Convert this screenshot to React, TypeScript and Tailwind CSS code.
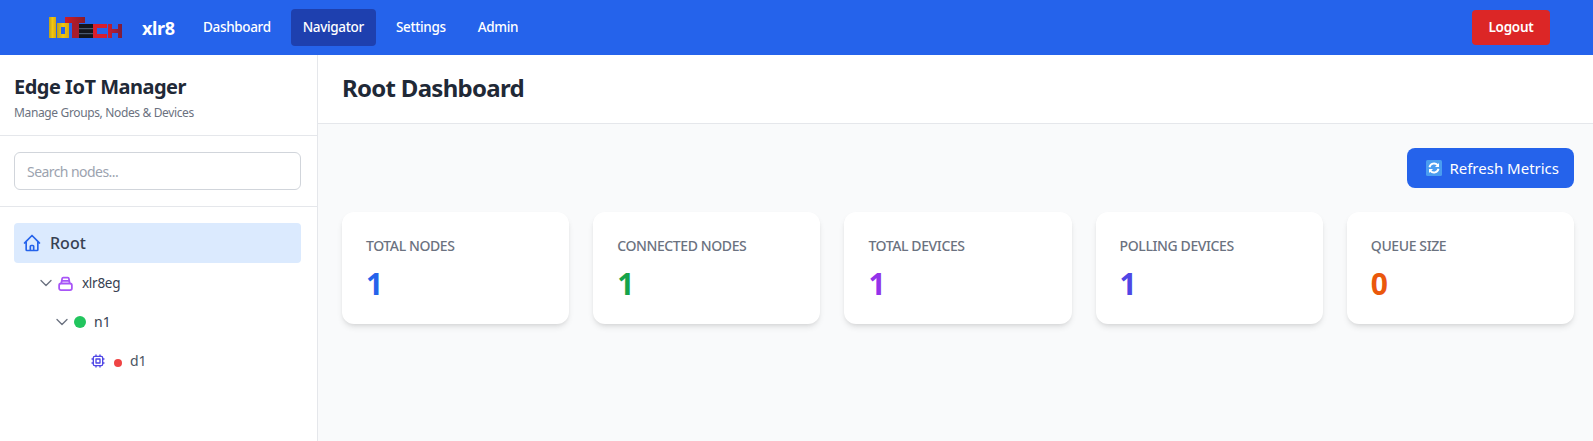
import { ChevronDown } from 'lucide-react';
import { HiOutlineChip, HiOutlineHome } from 'react-icons/hi';

function Logo() {
	return (
		<svg width="74" height="21" viewBox="0 0 74 21" className="block">
			<defs>
				<linearGradient id="gold" x1="0" x2="1" y1="0" y2="0">
					<stop offset="0" stopColor="#b9a020" />
					<stop offset="0.5" stopColor="#f2c60f" />
					<stop offset="1" stopColor="#d8a80f" />
				</linearGradient>
				<linearGradient id="crim" x1="0" x2="1" y1="0" y2="0">
					<stop offset="0" stopColor="#d01c28" />
					<stop offset="1" stopColor="#8a1c2a" />
				</linearGradient>
				<linearGradient id="darkred" x1="0" x2="1" y1="0" y2="0">
					<stop offset="0" stopColor="#c81e30" />
					<stop offset="1" stopColor="#7c1c3c" />
				</linearGradient>
			</defs>
			<rect x="0" y="0" width="7" height="21" fill="url(#gold)" />
			<path d="M8 6h12v15H8z M12 10v7h4v-7z" fillRule="evenodd" fill="url(#gold)" />
			<rect x="16" y="0" width="20" height="6" fill="url(#crim)" />
			<rect x="23" y="6" width="7" height="15" fill="#a81c2c" />
			<rect x="30" y="7" width="14" height="14" fill="#14161c" />
			<rect x="30" y="11" width="14" height="1.2" fill="#4a5a70" />
			<rect x="30" y="16" width="14" height="1.2" fill="#4a5a70" />
			<path d="M44 7h14v4H48v6h10v4H44z" fill="#d81e2c" />
			<path d="M59 7h4v5h6V7h4v14h-4v-5h-6v5h-4z" fill="url(#darkred)" />
		</svg>
	);
}

function NavLink({ label, active }: { label: string; active?: boolean }) {
	return (
		<a
			className={
				active
					? 'h-[37px] px-3 flex items-center rounded bg-[#1e40af] text-white text-[13.5px] tracking-[-0.025em] font-medium'
					: 'h-[37px] px-3 flex items-center rounded text-white text-[13.5px] tracking-[-0.025em] font-medium'
			}
		>
			{label}
		</a>
	);
}

function RefreshIcon() {
	return (
		<svg width="16" height="16" viewBox="0 0 16 16" className="shrink-0">
			<rect width="16" height="16" rx="1.5" fill="#4a9df0" />
			<path d="M3.5 7.2A4.6 4.6 0 0 1 11.6 5.2" fill="none" stroke="#fff" strokeWidth="1.9" />
			<path d="M13 3v4H9z" fill="#fff" />
			<path d="M12.5 8.8A4.6 4.6 0 0 1 4.4 10.8" fill="none" stroke="#fff" strokeWidth="1.9" />
			<path d="M3 13V9h4z" fill="#fff" />
		</svg>
	);
}

function BoxIcon() {
	return (
		<svg width="15" height="15" viewBox="0 0 16 16" fill="none" stroke="#a855f7" strokeWidth="1.9" strokeLinejoin="round">
			<rect x="1.2" y="8" width="13.6" height="7" rx="2" />
			<path d="M3.5 8 4.4 2.8c.1-.6.5-1 1.1-1h5c.6 0 1 .4 1.1 1L12.5 8" />
			<path d="M3.8 5.2h8.4" />
		</svg>
	);
}

const stats = [
	{ label: 'TOTAL NODES', value: '1', color: 'text-[#2563eb]' },
	{ label: 'CONNECTED NODES', value: '1', color: 'text-[#16a34a]' },
	{ label: 'TOTAL DEVICES', value: '1', color: 'text-[#9333ea]' },
	{ label: 'POLLING DEVICES', value: '1', color: 'text-[#4f46e5]' },
	{ label: 'QUEUE SIZE', value: '0', color: 'text-[#ea580c]' },
];

export default function App() {
	return (
		<div className="h-[441px] w-full flex flex-col overflow-hidden bg-white font-['Noto_Sans',sans-serif]">
			<header className="h-[55px] shrink-0 bg-[#2563eb] flex items-center justify-between pl-[49px] pr-[43px]">
				<div className="flex items-center">
					<Logo />
					<span className="w-[32px] ml-[19px] mr-[17px] text-white text-lg font-bold tracking-[-0.02em]">xlr8</span>
					<nav className="flex items-center gap-2">
						<NavLink label="Dashboard" />
						<NavLink label="Navigator" active />
						<NavLink label="Settings" />
						<NavLink label="Admin" />
					</nav>
				</div>
				<button className="h-[35px] w-[78px] rounded bg-[#dc2626] text-white text-[13.5px] tracking-[-0.02em] font-semibold">Logout</button>
			</header>
			<div className="flex flex-1 min-h-0">
				<aside className="w-[318px] shrink-0 border-r border-[#e5e7eb] flex flex-col">
					<div className="h-[81px] px-[14px] pt-[18px] border-b border-[#e5e7eb]">
						<h2 className="text-xl font-bold leading-7 text-[#1f2937] tracking-[-0.025em]">Edge IoT Manager</h2>
						<p className="text-xs text-[#6b7280] mt-1 tracking-[-0.03em]">Manage Groups, Nodes &amp; Devices</p>
					</div>
					<div className="h-[71px] px-[14px] pt-4 border-b border-[#e5e7eb]">
						<input
							placeholder="Search nodes..."
							className="w-[287px] h-[38px] px-3 rounded-md border border-[#d1d5db] text-sm tracking-[-0.04em] outline-none placeholder:text-[#9ca3af]"
						/>
					</div>
					<div className="px-[14px] pt-4">
						<div className="h-10 w-[287px] rounded bg-[#dbeafe] flex items-center gap-2 pl-2">
							<HiOutlineHome className="w-5 h-5 text-[#2563eb]" />
							<span className="text-base font-medium text-[#374151]">Root</span>
						</div>
						<div className="h-[38px] flex items-center pl-[22px] mt-[1px]">
							<ChevronDown className="w-5 h-5 text-[#6b7280]" strokeWidth={1.6} />
							<span className="ml-[2px]"><BoxIcon /></span>
							<span className="ml-[9px] text-[13.5px] tracking-[-0.02em] text-[#374151]">xlr8eg</span>
						</div>
						<div className="h-[38px] flex items-center pl-[38px] mt-[1px]">
							<ChevronDown className="w-5 h-5 text-[#6b7280]" strokeWidth={1.6} />
							<span className="w-3 h-3 ml-[2px] rounded-full bg-[#22c55e]" />
							<span className="ml-2 text-sm text-[#374151]">n1</span>
						</div>
						<div className="h-[40px] flex items-center pl-[76px]">
							<HiOutlineChip className="w-4 h-4 text-[#4f46e5]" />
							<span className="ml-[8px] mt-[4px] w-2 h-2 rounded-full bg-[#ef4444]" />
							<span className="ml-2 text-sm text-[#4b5563]">d1</span>
						</div>
					</div>
				</aside>
				<main className="flex-1 min-w-0 bg-[#f9fafb] flex flex-col">
					<div className="h-[69px] shrink-0 bg-white border-b border-[#e5e7eb] pl-6 pb-[2px] flex items-center">
						<h1 className="text-2xl font-bold text-[#1f2937] tracking-[-0.03em]">Root Dashboard</h1>
					</div>
					<div className="pl-6 pr-[19px] pt-6">
						<div className="flex justify-end">
							<button className="h-10 pl-[19px] pr-[15px] rounded-lg bg-[#2563eb] text-white text-[15px] flex items-center gap-[7px]">
								<RefreshIcon />
								Refresh Metrics
							</button>
						</div>
						<div className="grid grid-cols-5 gap-6 mt-6">
							{stats.map(s => (
								<div key={s.label} className="h-28 rounded-xl bg-white shadow-md p-6">
									<div className="text-sm font-medium text-[#6b7280] tracking-[-0.028em]">{s.label}</div>
									<div className={`text-3xl font-bold mt-[10px] ${s.color}`}>{s.value}</div>
								</div>
							))}
						</div>
					</div>
				</main>
			</div>
		</div>
	);
}
